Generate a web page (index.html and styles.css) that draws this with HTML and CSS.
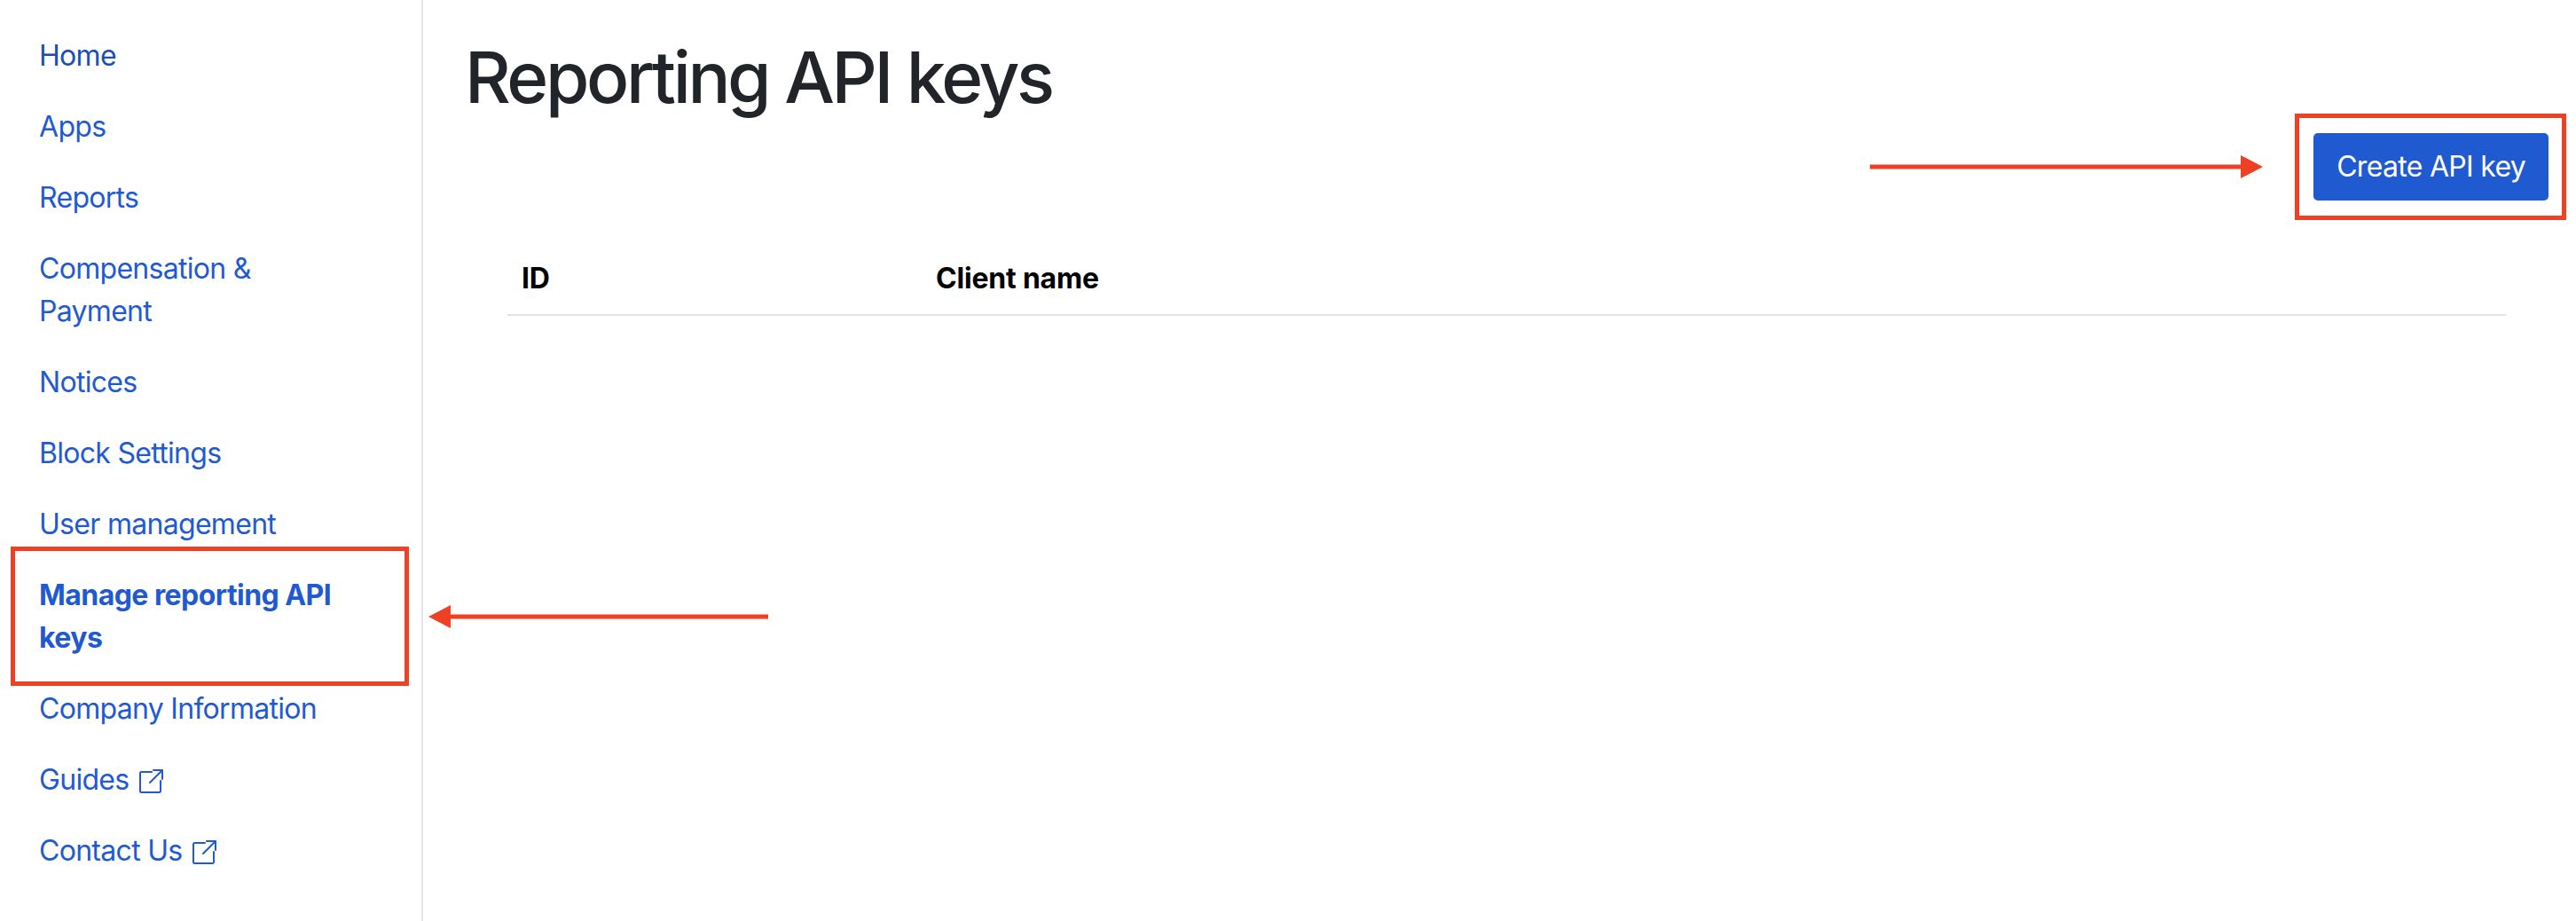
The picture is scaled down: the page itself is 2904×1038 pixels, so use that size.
FILE: index.html
```html
<!DOCTYPE html>
<html lang="en">
<head>
  <meta charset="UTF-8">
  <title>Reporting API keys</title>
  <link rel="stylesheet" href="styles.css">
</head>
<body>
<nav class="sidebar">
  <a href="#" class="nav-link nav-link-home">Home</a>
  <a href="#" class="nav-link">Apps</a>
  <a href="#" class="nav-link">Reports</a>
  <a href="#" class="nav-link">Compensation &amp; Payment</a>
  <a href="#" class="nav-link">Notices</a>
  <a href="#" class="nav-link">Block Settings</a>
  <a href="#" class="nav-link">User management</a>
  <a href="#" class="nav-link active">Manage reporting API keys</a>
  <a href="#" class="nav-link">Company Information</a>
  <a href="#" class="nav-link">Guides
    <svg class="ext-icon" viewBox="0 0 28 28" aria-hidden="true">
      <path d="M15 3H3.5A1.5 1.5 0 0 0 2 4.5v20A1.5 1.5 0 0 0 3.5 26h20a1.5 1.5 0 0 0 1.5-1.5V13"/>
      <path d="M13 15L27 1M17 1h10v10"/>
    </svg>
  </a>
  <a href="#" class="nav-link">Contact Us
    <svg class="ext-icon" viewBox="0 0 28 28" aria-hidden="true">
      <path d="M15 3H3.5A1.5 1.5 0 0 0 2 4.5v20A1.5 1.5 0 0 0 3.5 26h20a1.5 1.5 0 0 0 1.5-1.5V13"/>
      <path d="M13 15L27 1M17 1h10v10"/>
    </svg>
  </a>
</nav>

<main class="content">
  <h1>Reporting API keys</h1>
  <div class="actions">
    <button type="button" class="btn-primary">Create API key</button>
  </div>
  <table class="keys-table">
    <thead>
      <tr>
        <th class="col-id">ID</th>
        <th>Client name</th>
      </tr>
    </thead>
  </table>
</main>

<!-- red callouts drawn over the screenshot -->
<div class="callout callout-nav"></div>
<div class="callout callout-button"></div>
<svg class="callout-arrows" viewBox="0 0 2904 1038" aria-hidden="true">
  <path d="M2108 188H2528"/>
  <polygon points="2526,175 2551,188 2526,201"/>
  <path d="M866 695H506"/>
  <polygon points="508,682 483,695 508,708"/>
</svg>
</body>
</html>
```

FILE: styles.css
```css
* {
  box-sizing: border-box;
}

html,
body {
  height: 100%;
}

body {
  margin: 0;
  display: flex;
  overflow: hidden;
  background: #fff;
  color: #212529;
  font-family: Inter, "Noto Sans", sans-serif;
  font-size: 32px;
  letter-spacing: -0.7px;
  line-height: 48px;
}

.sidebar {
  flex: 0 0 477px;
  display: flex;
  flex-direction: column;
  padding: 23px 77px 0 44px;
  border-right: 2px solid #e5e5e5;
}

.nav-link {
  display: block;
  padding: 16px 0;
  color: #1f5ad0;
  text-decoration: none;
}

.nav-link-home {
  color: #1b4fb4;
}

.nav-link.active {
  font-weight: 700;
  letter-spacing: -0.55px;
}

.ext-icon {
  width: 28px;
  height: 28px;
  margin-left: 2px;
  vertical-align: -5px;
  fill: none;
  stroke: currentColor;
  stroke-width: 2;
  stroke-linecap: round;
  stroke-linejoin: round;
}

.content {
  flex: 1;
  min-width: 0;
  padding: 39px 31px 0 47px;
}

h1 {
  margin: 0 0 15px;
  font-size: 80px;
  font-weight: 500;
  letter-spacing: -3.4px;
  line-height: 96px;
}

.actions {
  display: flex;
  justify-content: flex-end;
  margin-bottom: 48px;
}

.btn-primary {
  padding: 12px 24px;
  border: 2px solid #1f5ad0;
  border-radius: 5px;
  background: #1f5ad0;
  color: #fff;
  font: inherit;
  letter-spacing: inherit;
}

.keys-table {
  width: calc(100% - 96px);
  margin: 0 48px;
  border-collapse: collapse;
  color: #000;
}

.keys-table th {
  padding: 16px;
  border-bottom: 2px solid #dee2e6;
  font-weight: 700;
  letter-spacing: -0.2px;
  text-align: left;
}

.keys-table .col-id {
  width: 467px;
}

.callout {
  position: absolute;
  border: 5px solid #ee4025;
}

.callout-nav {
  left: 12px;
  top: 616px;
  width: 449px;
  height: 157px;
}

.callout-button {
  left: 2587px;
  top: 128px;
  width: 306px;
  height: 120px;
}

.callout-arrows {
  position: absolute;
  left: 0;
  top: 0;
  width: 2904px;
  height: 1038px;
  pointer-events: none;
  fill: #ee4025;
  stroke: none;
}

.callout-arrows path {
  fill: none;
  stroke: #ee4025;
  stroke-width: 5;
}
```
